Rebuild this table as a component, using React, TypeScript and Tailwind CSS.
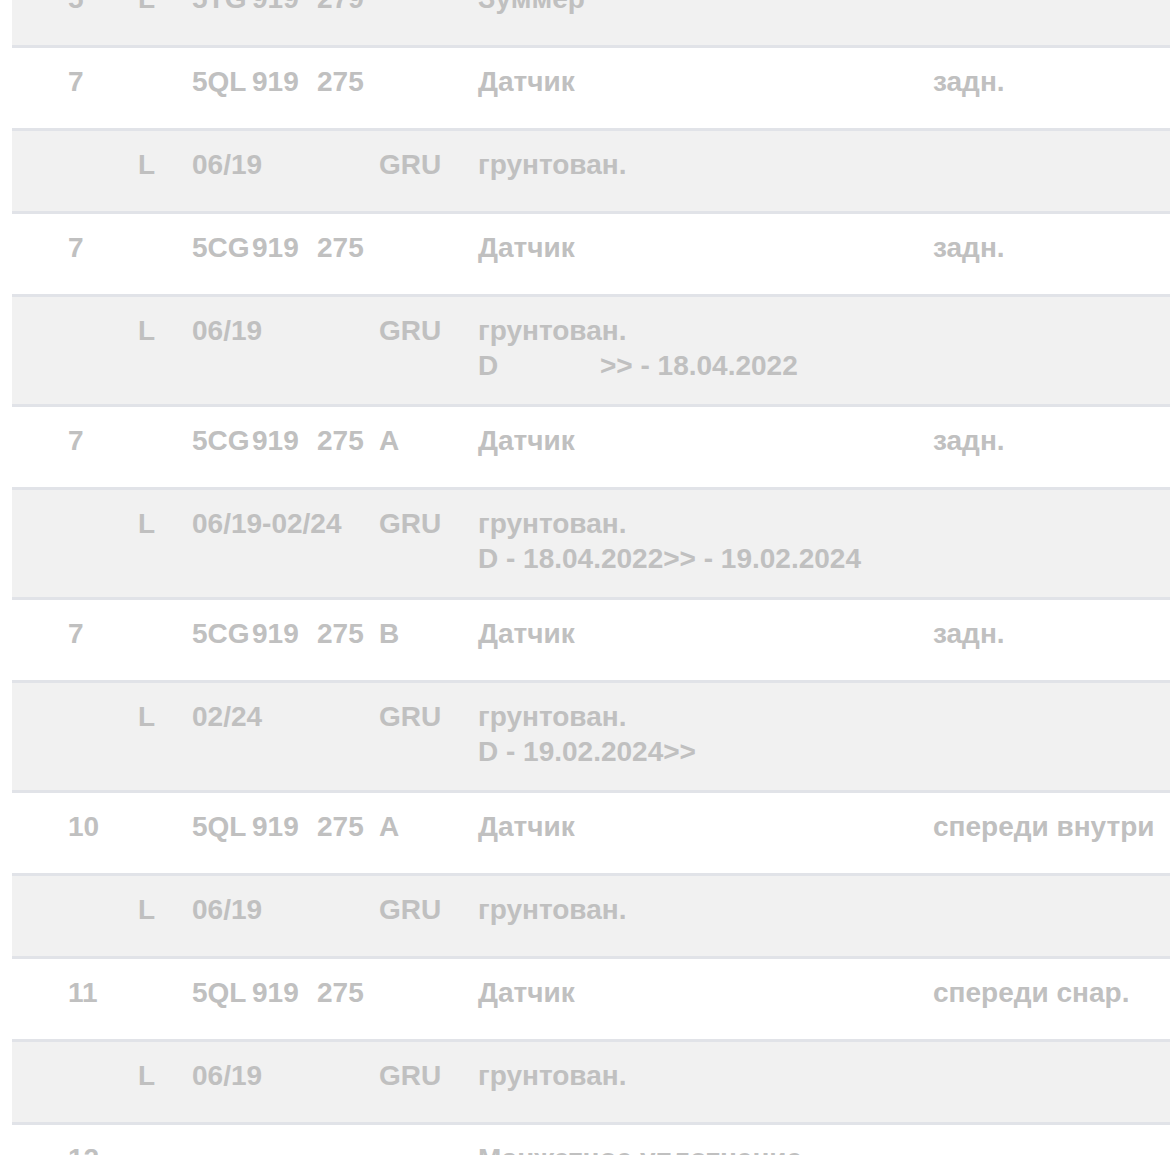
import React from "react";

type Row = {
  num?: string;
  l?: string;
  part?: [string, string, string];
  date?: string;
  letter?: string;
  desc: React.ReactNode;
  note?: string;
  gray?: boolean;
};

const rows: Row[] = [
  { num: "5", l: "L", part: ["5TG", "919", "279"], desc: "Зуммер", gray: true },
  { num: "7", part: ["5QL", "919", "275"], desc: "Датчик", note: "задн." },
  { l: "L", date: "06/19", letter: "GRU", desc: "грунтован.", gray: true },
  { num: "7", part: ["5CG", "919", "275"], desc: "Датчик", note: "задн." },
  {
    l: "L",
    date: "06/19",
    letter: "GRU",
    desc: (
      <>
        грунтован.
        <br />
        <span className="inline-block w-[122px]">D</span>&gt;&gt; - 18.04.2022
      </>
    ),
    gray: true,
  },
  { num: "7", part: ["5CG", "919", "275"], letter: "A", desc: "Датчик", note: "задн." },
  {
    l: "L",
    date: "06/19-02/24",
    letter: "GRU",
    desc: (
      <>
        грунтован.
        <br />D - 18.04.2022&gt;&gt; - 19.02.2024
      </>
    ),
    gray: true,
  },
  { num: "7", part: ["5CG", "919", "275"], letter: "B", desc: "Датчик", note: "задн." },
  {
    l: "L",
    date: "02/24",
    letter: "GRU",
    desc: (
      <>
        грунтован.
        <br />D - 19.02.2024&gt;&gt;
      </>
    ),
    gray: true,
  },
  { num: "10", part: ["5QL", "919", "275"], letter: "A", desc: "Датчик", note: "спереди внутри" },
  { l: "L", date: "06/19", letter: "GRU", desc: "грунтован.", gray: true },
  { num: "11", part: ["5QL", "919", "275"], desc: "Датчик", note: "спереди снар." },
  { l: "L", date: "06/19", letter: "GRU", desc: "грунтован.", gray: true },
  { num: "12", desc: "Манжетное уплотнение" },
];

function PartRow({ row }: { row: Row }) {
  return (
    <div
      className={`grid grid-cols-[70px_54px_187px_99px_455px_1fr] min-h-[83px] border-t-[3px] border-[#e1e3e8] pl-[56px] pt-4 pb-[21px] ${
        row.gray ? "bg-[#f1f1f1]" : "bg-white"
      }`}
    >
      <div>{row.num}</div>
      <div>{row.l}</div>
      <div className="flex whitespace-nowrap">
        {row.part ? (
          <>
            <span className="w-[60px]">{row.part[0]}</span>
            <span className="w-[65px]">{row.part[1]}</span>
            <span>{row.part[2]}</span>
          </>
        ) : (
          <span>{row.date}</span>
        )}
      </div>
      <div>{row.letter}</div>
      <div className="whitespace-nowrap">{row.desc}</div>
      <div className="whitespace-nowrap">{row.note}</div>
    </div>
  );
}

export default function App() {
  return (
    <div className="h-[1155px] overflow-hidden bg-white">
      <div className="mt-[-38px] pl-3 font-['Liberation_Sans',Arial,sans-serif] text-[28px] leading-[35px] font-bold text-[#c0c0c0]">
        {rows.map((row, i) => (
          <PartRow key={i} row={row} />
        ))}
      </div>
    </div>
  );
}
